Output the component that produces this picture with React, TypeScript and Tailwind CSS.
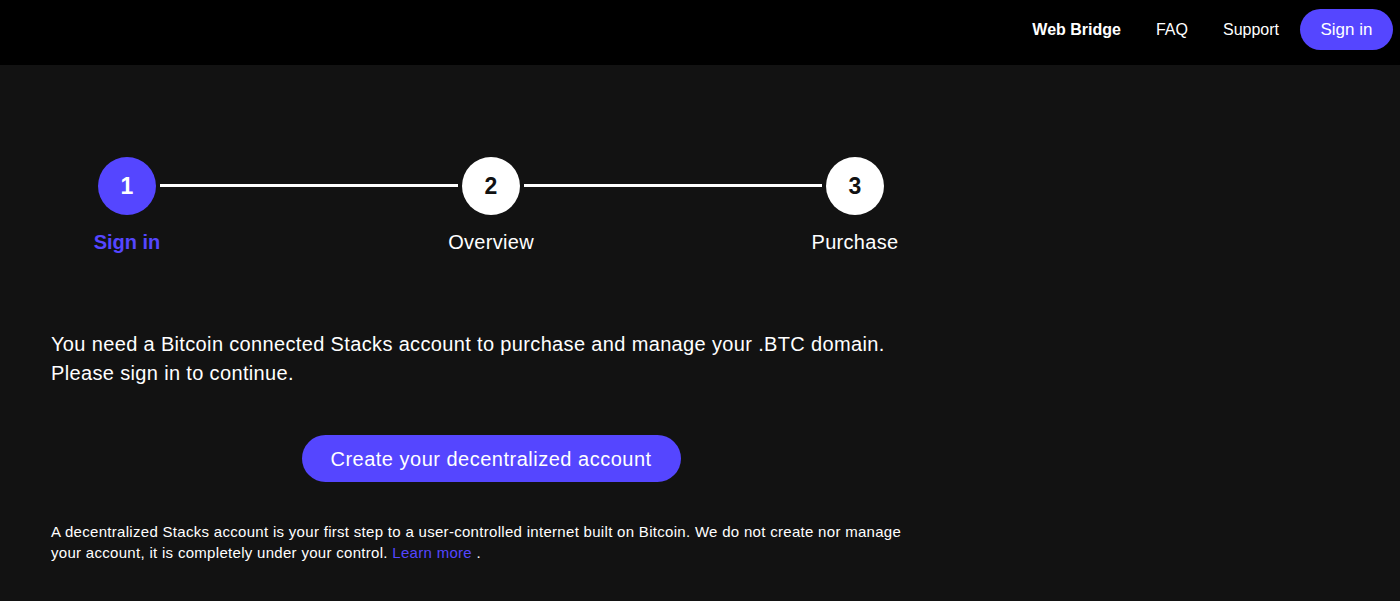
const FONT = { fontFamily: '"Liberation Sans", Arial, sans-serif' };

const STEPS = [
  { n: 1, label: "Sign in", active: true },
  { n: 2, label: "Overview", active: false },
  { n: 3, label: "Purchase", active: false },
];

function Step({ n, label, active }: { n: number; label: string; active: boolean }) {
  return (
    <div className="flex w-[58px] shrink-0 flex-col items-center">
      <div
        className={`flex h-[58px] w-[58px] items-center justify-center rounded-full text-[23px] font-bold ${
          active ? "bg-[#5546ff] text-white" : "bg-white text-[#111]"
        }`}
      >
        {n}
      </div>
      <p
        className={`mt-[15px] whitespace-nowrap text-[20px] leading-[24px] ${
          active ? "font-semibold text-[#5546ff]" : "tracking-[0.3px] text-white"
        }`}
      >
        {label}
      </p>
    </div>
  );
}

export default function App() {
  return (
    <div className="min-h-[601px] bg-[#121212] text-white" style={FONT}>
      <header className="flex h-[65px] items-center justify-end bg-black pr-[7px] pb-[6px] text-[16px]">
        <a className="font-bold">Web Bridge</a>
        <a className="ml-[35px]">FAQ</a>
        <a className="ml-[35px]">Support</a>
        <button className="ml-[21px] h-[41px] w-[93px] rounded-full bg-[#5546ff] text-[17px] text-white">
          Sign in
        </button>
      </header>

      <main className="ml-[51px] w-[880px]">
        <div className="flex px-[47px] pt-[92px]">
          {STEPS.map((s, i) => (
            <div key={s.n} className={`flex ${i < 2 ? "flex-1" : ""}`}>
              <Step {...s} />
              {i < 2 && (
                <div className="mx-[4px] mt-[27px] h-[3px] flex-1 bg-white" />
              )}
            </div>
          ))}
        </div>

        <p className="mt-[76px] text-[20px] leading-[29px] tracking-[0.35px]">
          You need a Bitcoin connected Stacks account to purchase and manage your .BTC domain.
          <br />
          Please sign in to continue.
        </p>

        <div className="mt-[47px] flex justify-center">
          <button className="h-[47px] w-[379px] rounded-full bg-[#5546ff] text-[20px] tracking-[0.5px] text-white">
            Create your decentralized account
          </button>
        </div>

        <p className="mt-[39px] text-[15px] leading-[21px] tracking-[0.3px]">
          A decentralized Stacks account is your first step to a user-controlled internet built on Bitcoin. We do not create nor manage
          <br />
          your account, it is completely under your control.{" "}
          <a className="text-[#5546ff]">Learn more</a> .
        </p>
      </main>
    </div>
  );
}
